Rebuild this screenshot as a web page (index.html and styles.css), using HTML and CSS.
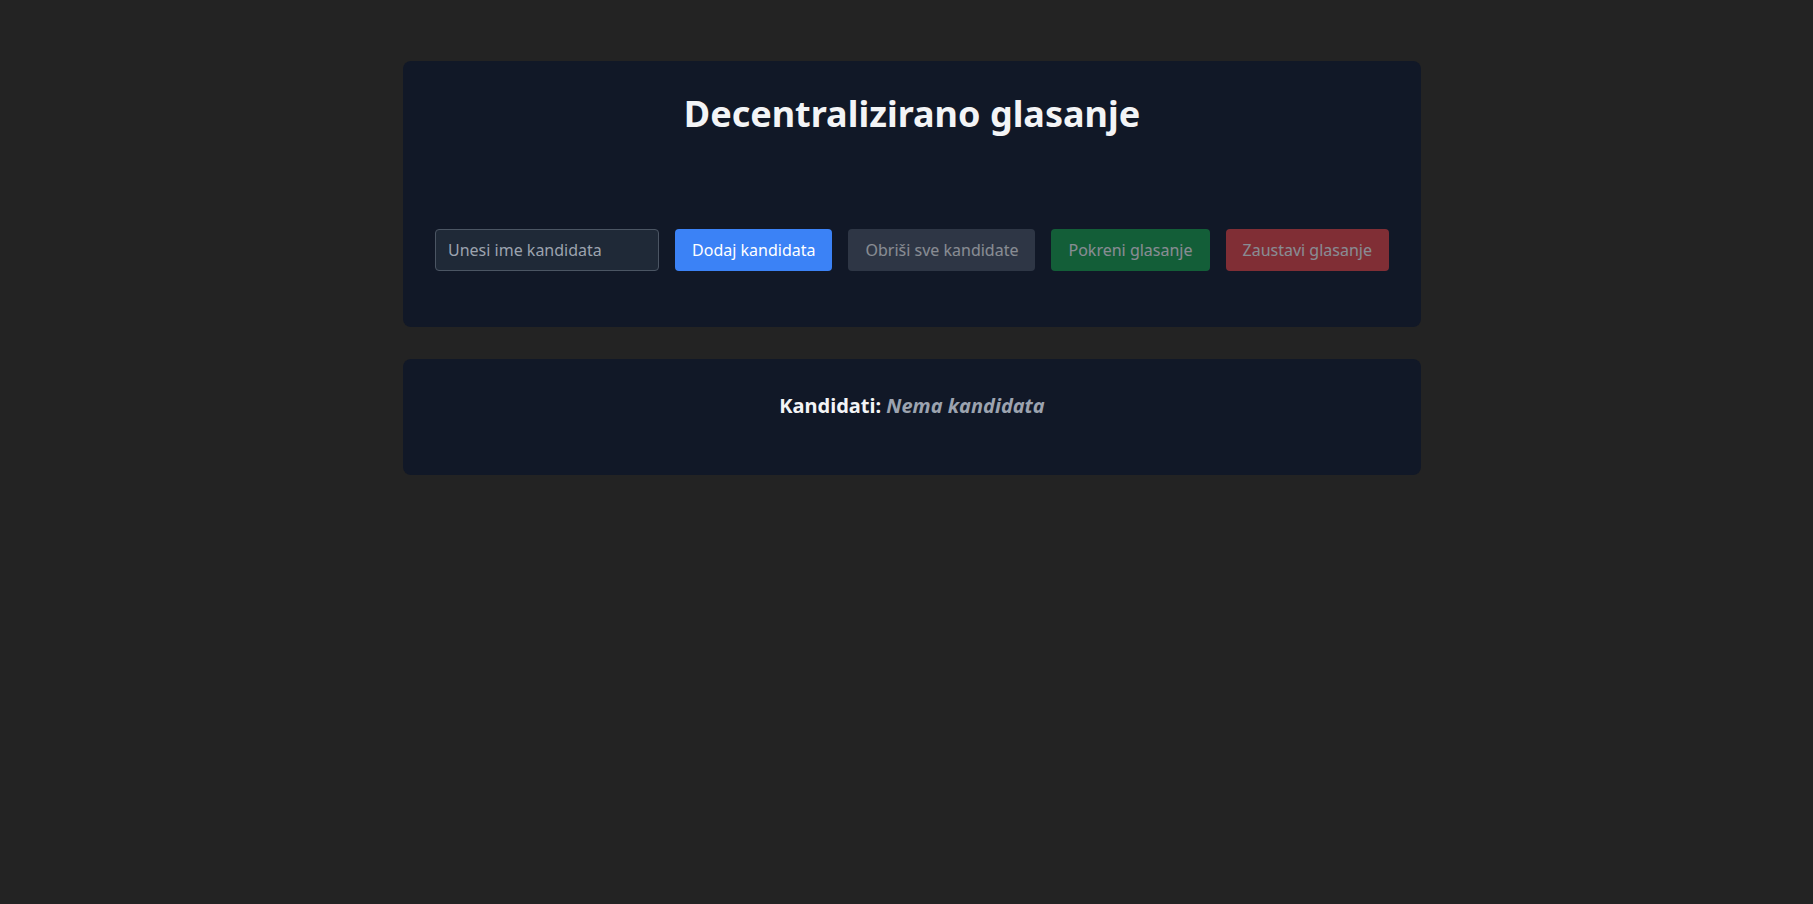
FILE: index.html
```html
<!DOCTYPE html>
<html lang="hr">
<head>
<meta charset="utf-8">
<title>Decentralizirano glasanje</title>
<link rel="stylesheet" href="styles.css">
</head>
<body>
<main class="page">
  <section class="card">
    <h1 class="title">Decentralizirano glasanje</h1>
    <div class="controls">
      <input class="name-input" type="text" placeholder="Unesi ime kandidata">
      <button class="btn btn-blue">Dodaj kandidata</button>
      <button class="btn btn-gray" disabled>Obriši sve kandidate</button>
      <button class="btn btn-green" disabled>Pokreni glasanje</button>
      <button class="btn btn-red" disabled>Zaustavi glasanje</button>
    </div>
  </section>
  <section class="card">
    <h2 class="subtitle">Kandidati: <em class="empty">Nema kandidata</em></h2>
  </section>
</main>
</body>
</html>
```

FILE: styles.css
```css
html, body {
  margin: 0;
  padding: 0;
  background: #232323;
  font-family: "Noto Sans", "Open Sans", sans-serif;
  color: #f3f4f6;
}
.page {
  width: 1018px;
  margin: 0 auto;
  padding: 61px 0 0 11px;
  display: flex;
  flex-direction: column;
  gap: 32px;
}
.card {
  background: #111827;
  border-radius: 8px;
  padding: 32px;
}
.title {
  margin: 1px 0 95px;
  text-align: center;
  font-size: 36px;
  line-height: 40px;
  font-weight: 700;
  color: #f3f4f6;
}
.controls {
  display: flex;
  gap: 16px;
  margin-bottom: 24px;
}
.name-input {
  flex: 1;
  min-width: 0;
  height: 42px;
  box-sizing: border-box;
  padding: 8px 12px;
  background: #1f2937;
  border: 1px solid #4b5563;
  border-radius: 4px;
  color: #f3f4f6;
  font-family: inherit;
  font-size: 16px;
  line-height: 24px;
  outline: none;
}
.name-input::placeholder {
  color: #9ca3af;
}
.btn {
  height: 42px;
  box-sizing: border-box;
  padding: 0 17px;
  border: none;
  border-radius: 4px;
  font-family: inherit;
  font-size: 16px;
  line-height: 24px;
  color: #ffffff;
  white-space: nowrap;
  cursor: pointer;
}
.btn:disabled {
  opacity: 0.5;
  cursor: not-allowed;
}
.btn-blue { background: #3b82f6; }
.btn-gray { background: #4b5563; }
.btn-green { background: #16a34a; }
.btn-red { background: #ef4444; }
.subtitle {
  margin: 1px 0 23px;
  text-align: center;
  font-size: 20px;
  line-height: 28px;
  font-weight: 700;
  color: #f3f4f6;
}
.empty {
  color: #9ca3af;
  font-style: italic;
}
```
